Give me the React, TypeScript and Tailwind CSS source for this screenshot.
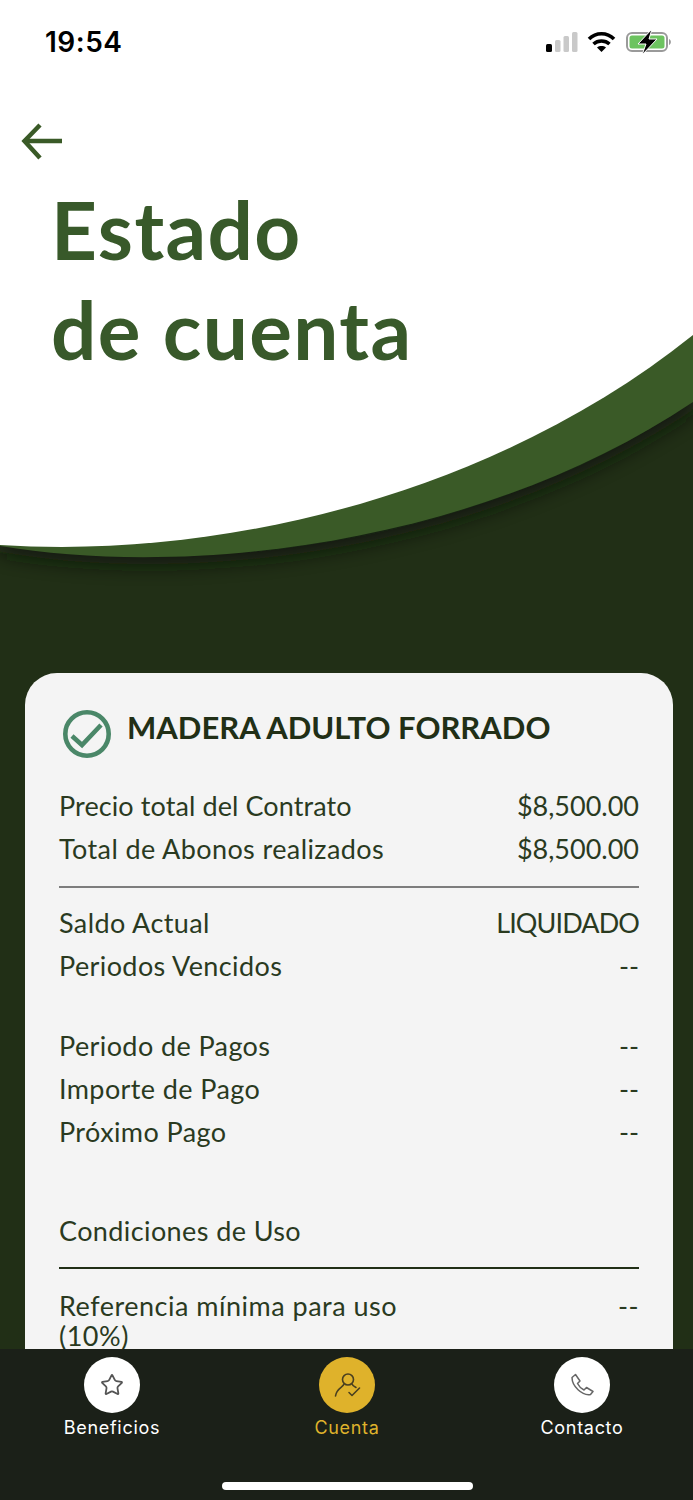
import React from "react";
import { Star } from "lucide-react";

const FONT = "font-['Lato','Noto_Sans',sans-serif]";
const UI_FONT = "font-['Inter','Liberation_Sans',sans-serif]";

const Row: React.FC<{ label: string; value: string; labelClass?: string; valueClass?: string }> = ({ label, value, labelClass, valueClass }) => (
  <div className="flex h-[43px] items-center justify-between">
    <span className={labelClass || "tracking-[0.4px]"}>{label}</span>
    <span className={valueClass}>{value}</span>
  </div>
);

const Wave = () => (
  <svg className="absolute left-0 top-0" width="693" height="620" viewBox="0 0 693 620">
    <defs>
      <filter id="waveShadow" x="-10%" y="-10%" width="120%" height="130%">
        <feGaussianBlur stdDeviation="10" />
      </filter>
    </defs>
    <path d="M0 552 C190 586 480 553 693 410 V380 C480 523 190 556 0 530 Z" fill="#0e1507" opacity="0.8" filter="url(#waveShadow)" />
    <path d="M0 0 H693 V402 C480 545 190 578 0 546 Z" fill="#3a5a27" />
    <path d="M0 0 H693 V335 C500 490 230 560 0 545 Z" fill="#ffffff" />
  </svg>
);

const StatusBar = () => (
  <div className="relative flex h-[84px] items-center justify-between pl-[45px] pr-[21px]">
    <span className={`${UI_FONT} text-[28px] font-semibold tracking-[0.5px] text-black`}>19:54</span>
    <svg width="126" height="26" viewBox="0 0 126 26">
      <rect x="0" y="15" width="6" height="8" rx="1.5" fill="#000" />
      <rect x="9" y="11" width="5.5" height="12" rx="1.5" fill="#c9c9c9" />
      <rect x="17.5" y="7" width="5.5" height="16" rx="1.5" fill="#c9c9c9" />
      <rect x="26" y="3" width="5.5" height="20" rx="1.5" fill="#c9c9c9" />
      <path d="M43 10 C50 3 61 3 68 10 M47.5 15 C52 11 59 11 63.5 15" stroke="#000" strokeWidth="3.6" fill="none" />
      <path d="M55.5 23 L51 18.5 C53.5 16.6 57.5 16.6 60 18.5 Z" fill="#000" />
      <rect x="81" y="4" width="40" height="18" rx="5" fill="none" stroke="#9a9a9a" strokeWidth="2" />
      <rect x="83.5" y="6.5" width="35" height="13" rx="2.5" fill="#6cc35f" />
      <path d="M123 10 C125.5 11 125.5 15 123 16 Z" fill="#9a9a9a" />
      <path d="M106 0 L92 15 H100 L96 26 L111 10 H103 Z" fill="#000" stroke="#fff" strokeWidth="1" />
    </svg>
  </div>
);

const UserCheck = () => (
  <svg width="27" height="26" viewBox="0 0 27 26" fill="none" stroke="#4a4020" strokeWidth="1.6" strokeLinecap="round" strokeLinejoin="round">
    <circle cx="14" cy="7.5" r="5.5" />
    <path d="M10 12 C9.5 15 2.5 16 1.5 24" />
    <path d="M18 12 C18.5 13.5 20 14.5 22 15.5" />
    <path d="M15 20.5 L18 23.5 L25.5 16" />
  </svg>
);

const PhoneIcon = () => (
  <svg width="25" height="24" viewBox="0 0 25 24" fill="none" stroke="#666" strokeWidth="1.5" strokeLinejoin="round">
    <path d="M2 4.5 L5.5 1.5 L10 8 L7.5 10.5 C9 13.5 11 15.5 14 17 L16.5 14.5 L23 18.5 L20.5 21.5 C12 23 2 13 2 4.5 Z" />
  </svg>
);

const NavItem: React.FC<{ label: string; active?: boolean; children: React.ReactNode }> = ({ label, active, children }) => (
  <div className="flex w-[160px] flex-col items-center">
    <div className={`flex h-[56px] w-[56px] items-center justify-center rounded-full ${active ? "bg-[#dfb22b]" : "bg-white"}`}>
      {children}
    </div>
    <span className={`${UI_FONT} mt-[2px] text-[18px] leading-[26px] tracking-[0.7px] ${active ? "text-[#dfb22b]" : "text-white"}`}>{label}</span>
  </div>
);

export default function App() {
  return (
    <div className={`${FONT} relative h-[1500px] w-[693px] overflow-hidden bg-[#212f16]`}>
      <Wave />
      <StatusBar />

      <div className="relative">
        <svg className="ml-[21px] mt-[39px]" width="44" height="38" viewBox="0 0 44 38" fill="none" stroke="#3a5a27" strokeWidth="4.5">
          <path d="M41 18 H4" />
          <path d="M19 2 L3.5 18 L19 35" />
        </svg>
        <h1 className="mt-[18px] pl-[51px] text-[80px] leading-[100px] font-bold tracking-[1.4px] text-[#38592a]">
          Estado
          <br />
          de cuenta
        </h1>
      </div>

      <div className="relative ml-[25px] mt-[294px] w-[648px] rounded-t-[32px] bg-[#f4f4f4] px-[34px] pb-[40px] pt-[22px] text-[27px] text-[#2a3a1f]">
        <div className="flex items-center">
          <svg className="ml-[3px] mt-[14px]" width="50" height="50" viewBox="0 0 50 50" fill="none" stroke="#4a8768">
            <circle cx="25" cy="25" r="21.7" strokeWidth="4.6" />
            <path d="M10 27 L20 36 L39 16" strokeWidth="4.6" />
          </svg>
          <h2 className="ml-[15px] text-[31px] leading-[40px] font-bold text-[#212f16]">MADERA ADULTO FORRADO</h2>
        </div>
        <div className="mt-[26px]">
          <Row label="Precio total del Contrato" value="$8,500.00" labelClass="tracking-[0.1px]" />
          <Row label="Total de Abonos realizados" value="$8,500.00" />
        </div>
        <div className="mt-[15px] h-[2px] bg-[#7d7d7d]" />
        <div className="mt-[14px]">
          <Row label="Saldo Actual" value="LIQUIDADO" valueClass="tracking-[-0.9px]" />
          <Row label="Periodos Vencidos" value="--" />
        </div>
        <div className="mt-[37px]">
          <Row label="Periodo de Pagos" value="--" />
          <Row label="Importe de Pago" value="--" />
          <Row label="Próximo Pago" value="--" />
        </div>
        <div className="mt-[55px] h-[43px] leading-[43px] tracking-[0.4px]">Condiciones de Uso</div>
        <div className="mt-[15px] h-[2px] bg-[#212f16]" />
        <div className="mt-[22px] flex justify-between leading-[30px] tracking-[0.5px]">
          <span>
            Referencia mínima para uso
            <br />
            (10%)
          </span>
          <span>--</span>
        </div>
      </div>

      <div className="absolute bottom-0 left-0 h-[151px] w-full bg-[#1b2018]">
        <div className="flex justify-between pl-[32px] pr-[31px] pt-[8px]">
          <NavItem label="Beneficios">
            <Star size={24} color="#555" strokeWidth={1.8} />
          </NavItem>
          <NavItem label="Cuenta" active>
            <UserCheck />
          </NavItem>
          <NavItem label="Contacto">
            <PhoneIcon />
          </NavItem>
        </div>
        <div className="absolute bottom-[10px] left-[222px] h-[8px] w-[251px] rounded-full bg-white" />
      </div>
    </div>
  );
}
